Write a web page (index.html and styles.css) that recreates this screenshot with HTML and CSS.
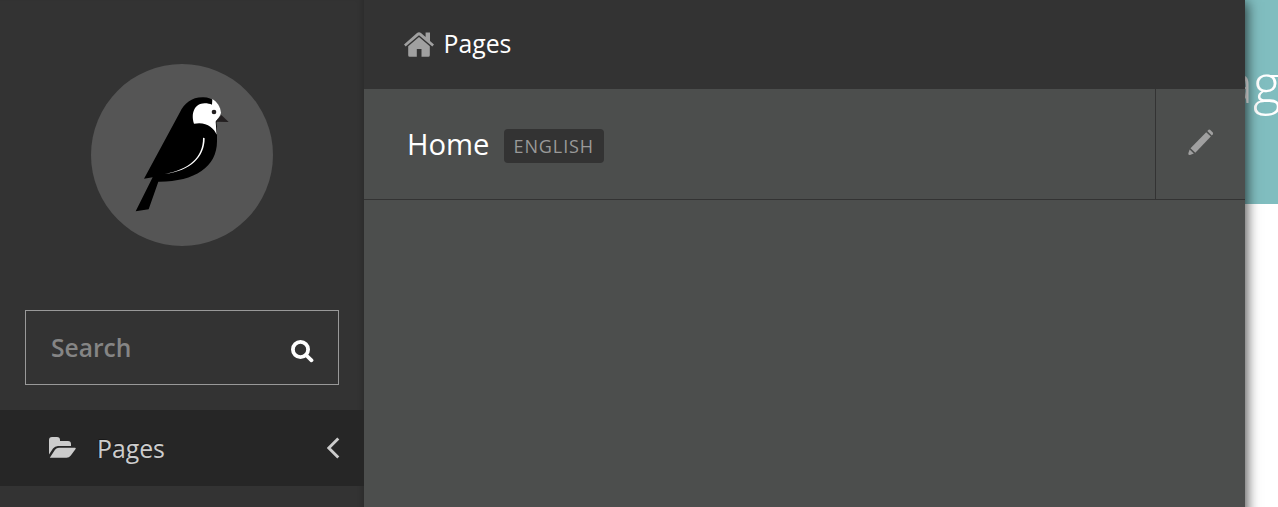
FILE: index.html
```html
<!DOCTYPE html>
<html lang="en">
<head>
<meta charset="utf-8">
<title>Pages</title>
<link rel="stylesheet" href="styles.css">
</head>
<body>
<div class="app">
  <aside class="sidebar">
    <div class="logo">
      <svg class="bird" viewBox="0 0 330 375">
        <path d="M42 266 L149 68 C163 40 184 22 218 22 C248 21 268 42 272 64 L259 98 C262 115 261 134 261 154 C261 232 193 276 85 275 L56 358 L17 364 L68 262 Z"/>
        <path class="white" d="M247 27 C262 36 272 51 273 68 C271 79 260 89 257 95 L260 134 C251 112 228 94 192 101 C182 70 193 41 224 40 C233 40 240 42 246 44 Z"/>
        <circle class="beak" cx="252" cy="66" r="7"/>
        <path class="beak" d="M274 75 L296 96 L257 95 Z"/>
        <path class="white" d="M219 144 Q222 142 224 145 C224 201 182 243 105 252 C174 239 220 203 219 144 Z"/>
      </svg>
    </div>
    <form class="search">
      <span class="search-label">Search</span>
      <svg class="search-icon" viewBox="0 0 23 23"><circle cx="9.5" cy="9.5" r="7.6"/><path d="M15 15 L20.5 20.3"/></svg>
    </form>
    <nav class="menu-item">
      <svg class="folder" viewBox="0 0 27 21">
        <path d="M0 17.5 V3 Q0 0 3 0 H8 Q11 0 11 3 V4 H19 Q22 4 22 7 V9 H9 Q6 9 4 11.5 Z"/>
        <path d="M.8 20.7 L6 12.8 Q7.5 10.8 10 10.8 H26 Q27.3 11 26.4 12.2 L21.8 18.5 Q20 20.7 17.5 20.7 Z"/>
      </svg>
      <span class="menu-label">Pages</span>
      <svg class="chevron" viewBox="0 0 13 22"><path d="M11.3 1.5 L1.8 11 L11.3 20.5"/></svg>
    </nav>
  </aside>
  <main class="explorer">
    <header class="explorer-head">
      <svg class="house" viewBox="0 0 30 25">
        <path d="M0 12.5 L13 1 Q15 -.6 17 1 L21.6 5 V.5 H26 V9 L30 12.5 L28.3 14.5 L15 3.2 L1.7 14.5 Z"/>
        <path d="M15 5 L25.8 14.2 V23.2 Q25.8 24.7 24.3 24.7 H17.5 V17 H12.8 V24.7 H5.7 Q4.2 24.7 4.2 23.2 V14.2 Z"/>
      </svg>
      <span class="head-label">Pages</span>
    </header>
    <div class="row">
      <div class="row-title"><span class="row-label">Home</span><span class="tag">ENGLISH</span></div>
      <div class="row-edit">
        <svg class="pencil" viewBox="0 0 26 27">
          <path d="M18.2 3.2 L22.8 7.6 L7.3 23.7 L2.5 19.2 Z"/>
          <path d="M19.3 2 L20.6 .8 Q21.5 .2 22.3 1 L24.8 3.6 Q25.4 4.4 24.8 5.2 L23.8 6.4 Z"/>
          <path d="M1.6 20.4 L5.8 24.4 L2 26 Q.2 26.2 .3 24.5 Z"/>
        </svg>
      </div>
    </div>
  </main>
  <section class="page"><div class="banner"><span class="banner-title">ag</span></div></section>
</div>
</body>
</html>
```
FILE: styles.css
```css
body {
  margin: 0;
  overflow: hidden;
  font-family: "Open Sans", sans-serif;
}
.app {
  display: flex;
  width: 1278px;
  height: 527px;
  overflow: hidden;
}
.sidebar {
  width: 364px;
  flex: none;
  background: #333;
  box-shadow: inset -6px 0 6px -5px rgba(0, 0, 0, .2);
}
.logo {
  display: flex;
  width: 182px;
  height: 182px;
  margin: 64px 0 64px 91px;
  border-radius: 50%;
  background: #555;
}
.bird {
  width: 110px;
  height: 125px;
  margin: 26px 0 0 39px;
}
.white { fill: #fff; }
.beak { fill: #231f20; }
.search {
  display: flex;
  justify-content: space-between;
  box-sizing: border-box;
  width: 314px;
  height: 75px;
  margin: 0 0 25px 25px;
  padding: 0 24px 0 25px;
  border: 1px solid #999;
}
.search-label {
  color: #858585;
  font-size: 24.6px;
  font-weight: 600;
  line-height: 74px;
}
.search-icon {
  width: 23px;
  height: 23px;
  margin-top: 29px;
  fill: none;
  stroke: #fff;
  stroke-width: 3.8;
  stroke-linecap: round;
}
.menu-item {
  display: flex;
  align-items: center;
  box-sizing: border-box;
  height: 76px;
  padding: 0 24px 0 49px;
  background: #262626;
  color: #ccc;
  font-size: 24.8px;
}
.menu-label {
  flex: 1;
  margin-left: 21px;
  text-shadow: -1px -1px 0 rgba(0, 0, 0, .35);
}
.folder {
  width: 27px;
  height: 21px;
  margin-bottom: 1px;
  fill: #ccc;
}
.chevron {
  width: 13px;
  height: 22px;
  fill: none;
  stroke: #ccc;
  stroke-width: 2.9;
}
.explorer {
  position: relative;
  z-index: 1;
  width: 881px;
  flex: none;
  background: #4c4e4d;
  box-shadow: 2px 2px 12px rgba(0, 0, 0, .7);
  clip-path: inset(0 -33px 0 0);
}
.explorer-head {
  display: flex;
  align-items: center;
  gap: 9.5px;
  box-sizing: border-box;
  height: 89px;
  padding-left: 40px;
  background: #333;
  color: #fff;
  font-size: 24.8px;
}
.head-label { padding-bottom: 3px; }
.row-label { padding-bottom: 1px; }
.house {
  width: 30px;
  height: 25px;
  fill: #a0a0a0;
}
.row {
  display: flex;
  height: 110px;
  border-bottom: 1px solid #333;
}
.row-title {
  display: flex;
  align-items: center;
  flex: 1;
  gap: 14px;
  padding-left: 43px;
  color: #fff;
  font-size: 29.2px;
}
.tag {
  box-sizing: border-box;
  width: 100px;
  height: 34px;
  margin-top: 4px;
  padding-left: 10px;
  border-radius: 4px;
  background: #333;
  color: #999;
  font-size: 18px;
  line-height: 35px;
  letter-spacing: .9px;
}
.row-edit {
  box-sizing: border-box;
  width: 90px;
  border-left: 1px solid #333;
}
.pencil {
  display: block;
  width: 26px;
  height: 27px;
  margin: 40px 0 0 32px;
  fill: #a0a0a0;
}
.page {
  width: 33px;
  flex: none;
  background: #fff;
}
.banner {
  display: flex;
  justify-content: flex-end;
  height: 204px;
  background: #80bdbf;
  color: #fff;
  font-size: 54px;
  font-weight: 300;
  line-height: 165px;
}
.banner-title {
  margin-right: -3px;
}
```
